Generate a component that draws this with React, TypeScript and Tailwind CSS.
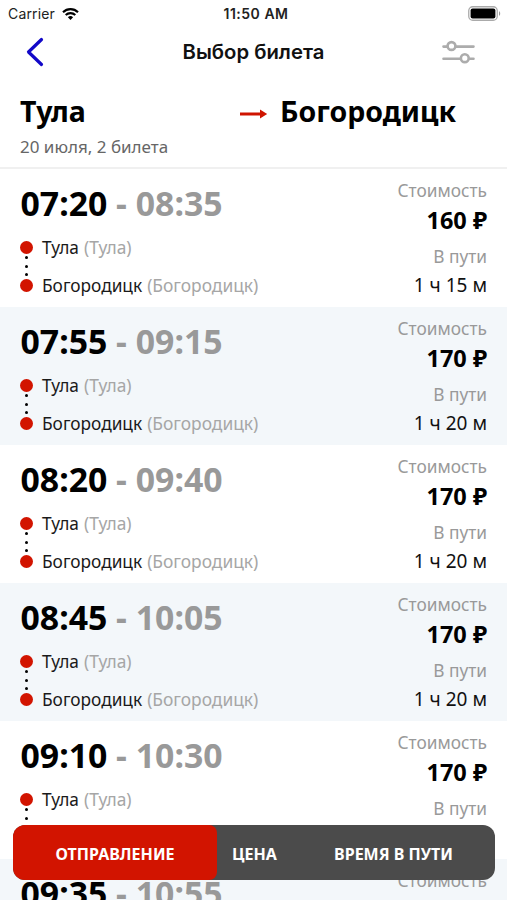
import React from "react";

interface Ticket {
  departure: string;
  arrival: string;
  price: string;
  duration: string;
}

const tickets: Ticket[] = [
  { departure: "07:20", arrival: "08:35", price: "160 ₽", duration: "1 ч 15 м" },
  { departure: "07:55", arrival: "09:15", price: "170 ₽", duration: "1 ч 20 м" },
  { departure: "08:20", arrival: "09:40", price: "170 ₽", duration: "1 ч 20 м" },
  { departure: "08:45", arrival: "10:05", price: "170 ₽", duration: "1 ч 20 м" },
  { departure: "09:10", arrival: "10:30", price: "170 ₽", duration: "1 ч 20 м" },
  { departure: "09:35", arrival: "10:55", price: "170 ₽", duration: "1 ч 20 м" },
];

const StatusBar: React.FC = () => (
  <div className="flex h-[27px] items-center justify-between pl-2 pr-[6px] font-['Inter',sans-serif] text-[14px] text-[#222]">
    <div className="flex flex-1 items-center gap-[7px]">
      <span className="tracking-[0.15px]">Carrier</span>
      <svg width="17" height="12" viewBox="0 0 17 12" fill="none" stroke="#000" strokeWidth="2.1">
        <path d="M1 4.2a10.7 10.7 0 0 1 15 0" />
        <path d="M3.7 7.1a6.9 6.9 0 0 1 9.6 0" />
        <path d="M8.5 12 5.9 9.3a3.8 3.8 0 0 1 5.2 0z" fill="#000" stroke="none" />
      </svg>
    </div>
    <span className="pl-[3px] font-semibold tracking-[0.5px]">11:50 AM</span>
    <div className="flex flex-1 justify-end">
      <svg width="33" height="15" viewBox="0 0 33 15">
        <rect x="0.75" y="0.75" width="28.5" height="13.5" rx="4" fill="#fff" stroke="#aaa" strokeWidth="1.3" />
        <rect x="2.6" y="2.6" width="24.8" height="9.8" rx="2" fill="#000" />
        <path d="M31 5.2c1.6.6 1.6 4 0 4.6z" fill="#999" />
      </svg>
    </div>
  </div>
);

const NavBar: React.FC = () => (
  <div className="flex h-[49px] items-center justify-between pl-[26px] pr-8">
    <svg width="32" height="30" viewBox="0 0 32 30" fill="none" stroke="#1208c8" strokeWidth="3.2" strokeLinecap="round" strokeLinejoin="round">
      <path d="M15.5 2.5 2.5 15l13 12.5" />
    </svg>
    <h1 className="pl-[7px] pt-px font-['Inter',sans-serif] text-[20.3px] font-semibold text-[#111]">
      Выбор билета
    </h1>
    <svg width="33" height="24" viewBox="0 0 33 24" fill="none" stroke="#acacac" strokeWidth="2.6" strokeLinecap="round">
      <path d="M1.5 6.6h4M14 6.6h17.5" />
      <circle cx="9.5" cy="6" r="3.9" />
      <path d="M1.5 18.8h17M27.5 18.8h4" />
      <circle cx="22.8" cy="18.2" r="3.9" />
    </svg>
  </div>
);

const RouteHeader: React.FC = () => (
  <div className="h-[93px] border-b-2 border-[#f0f0f0] pl-5 pt-[15px]">
    <div className="flex h-10 items-center text-[28.5px] font-bold text-black">
      <span className="w-[220px]">Тула</span>
      <svg className="mt-[6px]" width="28" height="10" viewBox="0 0 28 10">
        <path d="M0 3.6h20V0.5L27.2 5 20 9.5V6.4H0z" fill="#cf1400" />
      </svg>
      <span className="ml-3">Богородицк</span>
    </div>
    <p className="mt-1 text-[17px] leading-6 text-[#666]">20 июля, 2 билета</p>
  </div>
);

const Station: React.FC<{ name: string }> = ({ name }) => (
  <div className="flex h-[38px] items-center text-[17.3px]">
    <span className="mr-[9px] h-[13px] w-[13px] rounded-full bg-[#d21400]" />
    <span className="pt-px text-[#1a1a1a]">{name}</span>
    <span className="ml-[5px] pt-px text-[17.4px] text-[#a6a6a6]">({name})</span>
  </div>
);

const TicketRow: React.FC<{ ticket: Ticket }> = ({ ticket }) => (
  <li className="flex h-[138px] justify-between px-5 even:bg-[#f3f7fa]">
    <div className="relative pt-[14px]">
      <div className="pl-[0.5px] text-[33.8px] font-bold leading-10 text-[#999]">
        <span className="text-black">{ticket.departure}</span> - {ticket.arrival}
      </div>
      <div className="mt-[5px]">
        <Station name="Тула" />
        <Station name="Богородицк" />
      </div>
      <div className="absolute left-[5px] top-[87px] flex flex-col gap-[5.7px]">
        <i className="h-[3px] w-[3px] rounded-full bg-black" />
        <i className="h-[3px] w-[3px] rounded-full bg-black" />
        <i className="h-[3px] w-[3px] rounded-full bg-black" />
      </div>
    </div>
    <div className="pt-[11px] text-right">
      <p className="text-[17.3px] leading-[22px] text-[#999]">Стоимость</p>
      <p className="mt-[2px] text-[23.5px] font-bold leading-8 text-black">{ticket.price}</p>
      <p className="mt-[10px] text-[17.3px] leading-[22px] text-[#999]">В пути</p>
      <p className="mt-1 text-[19px] leading-[26px] text-[#111]">{ticket.duration}</p>
    </div>
  </li>
);

const SortBar: React.FC = () => (
  <div className="absolute bottom-5 left-[13px] flex h-[55px] w-[482px] overflow-hidden rounded-[12px] bg-[#4b4b4b] text-[16px] font-bold text-white">
    <button className="w-[204px] rounded-r-[8px] bg-[#d21400] pt-[2px]">ОТПРАВЛЕНИЕ</button>
    <button className="w-[75px] pt-[2px]">ЦЕНА</button>
    <button className="w-[203px] pt-[2px]">ВРЕМЯ В ПУТИ</button>
  </div>
);

const App: React.FC = () => {
  return (
    <div className="relative h-[900px] w-[507px] overflow-hidden bg-white font-['Noto_Sans',sans-serif]">
      <StatusBar />
      <NavBar />
      <RouteHeader />
      <ul>
        {tickets.map((ticket) => (
          <TicketRow key={ticket.departure} ticket={ticket} />
        ))}
      </ul>
      <SortBar />
    </div>
  );
};

export default App;
